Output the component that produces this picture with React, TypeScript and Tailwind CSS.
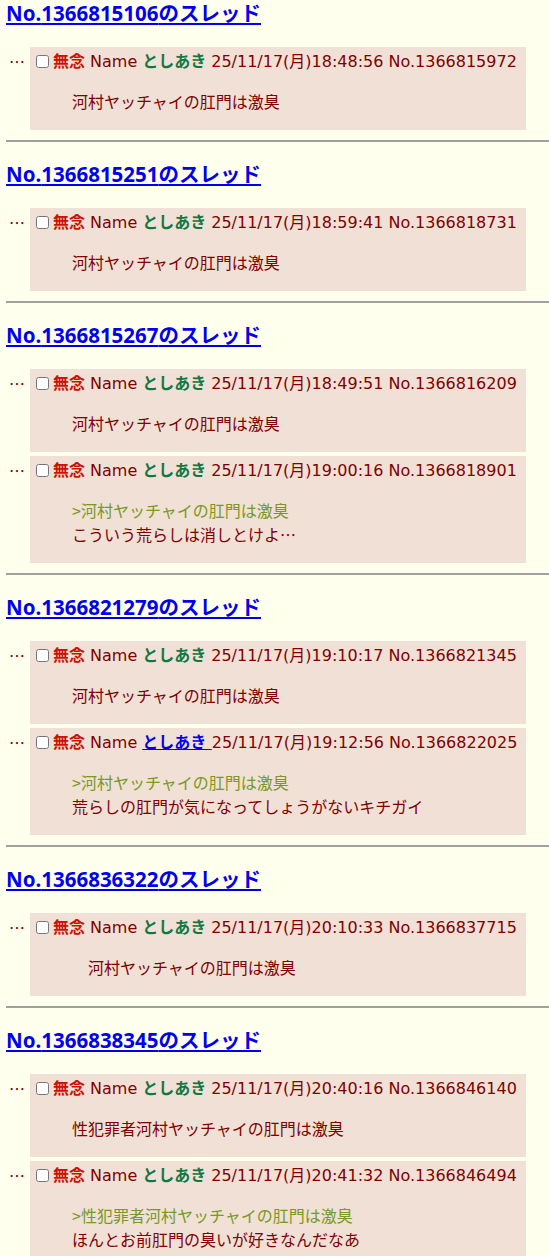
import React from "react";

type Reply = {
  date: string;
  no: string;
  quote?: string;
  body: string;
  mailto?: boolean;
};

type Thread = {
  no: string;
  replies: Reply[];
};

const threads: Thread[] = [
  {
    no: "1366815106",
    replies: [{ date: "25/11/17(月)18:48:56", no: "1366815972", body: "河村ヤッチャイの肛門は激臭" }],
  },
  {
    no: "1366815251",
    replies: [{ date: "25/11/17(月)18:59:41", no: "1366818731", body: "河村ヤッチャイの肛門は激臭" }],
  },
  {
    no: "1366815267",
    replies: [
      { date: "25/11/17(月)18:49:51", no: "1366816209", body: "河村ヤッチャイの肛門は激臭" },
      {
        date: "25/11/17(月)19:00:16",
        no: "1366818901",
        quote: ">河村ヤッチャイの肛門は激臭",
        body: "こういう荒らしは消しとけよ…",
      },
    ],
  },
  {
    no: "1366821279",
    replies: [
      { date: "25/11/17(月)19:10:17", no: "1366821345", body: "河村ヤッチャイの肛門は激臭" },
      {
        date: "25/11/17(月)19:12:56",
        no: "1366822025",
        quote: ">河村ヤッチャイの肛門は激臭",
        body: "荒らしの肛門が気になってしょうがないキチガイ",
        mailto: true,
      },
    ],
  },
  {
    no: "1366836322",
    replies: [{ date: "25/11/17(月)20:10:33", no: "1366837715", body: "\u3000河村ヤッチャイの肛門は激臭" }],
  },
  {
    no: "1366838345",
    replies: [
      { date: "25/11/17(月)20:40:16", no: "1366846140", body: "性犯罪者河村ヤッチャイの肛門は激臭" },
      {
        date: "25/11/17(月)20:41:32",
        no: "1366846494",
        quote: ">性犯罪者河村ヤッチャイの肛門は激臭",
        body: "ほんとお前肛門の臭いが好きなんだなあ",
      },
    ],
  },
];

const headerFont = { fontFamily: '"DejaVu Sans", "Noto Sans CJK JP", sans-serif' };
const cjkFont = { fontFamily: '"Noto Sans CJK JP", "Noto Sans", sans-serif' };

function ReplyRow({ reply }: { reply: Reply }) {
  return (
    <div className="flex">
      <div className="w-[30px] shrink-0 pl-[9px] pt-[3px] leading-[22px] text-[#800000]" style={cjkFont}>
        …
      </div>
      <div className="w-[496px] bg-[#f0e0d6] p-[2px]">
        <div
          className="flex h-[23px] items-center whitespace-nowrap pt-[2px] text-[16px] leading-[20px]"
          style={headerFont}
        >
          <input type="checkbox" className="mx-[4px] my-0 h-[13px] w-[13px] shrink-0" />
          <span className="font-bold text-[#cc1105]">無念</span>
          <span className="ml-[5px]">Name</span>
          {reply.mailto ? (
            <a href="#" className="ml-[5px] whitespace-pre font-bold text-[#0000ee] underline">
              {"としあき "}
            </a>
          ) : (
            <span className="ml-[5px] font-bold text-[#117743]">としあき</span>
          )}
          <span className={reply.mailto ? "" : "ml-[5px]"}>{reply.date}</span>
          <span className="ml-[5px]">No.{reply.no}</span>
        </div>
        <div className="mb-[15px] ml-[40px] mt-[17px] leading-[24px]" style={cjkFont}>
          {reply.quote && <div className="text-[#789922]">{reply.quote}</div>}
          <div className="whitespace-pre">{reply.body}</div>
        </div>
      </div>
    </div>
  );
}

export default function App() {
  return (
    <div
      className="min-h-[1256px] bg-[#ffffee] text-[16px] text-[#800000]"
      style={{ fontFamily: '"Noto Sans", "Noto Sans CJK JP", sans-serif' }}
    >
      {threads.map((thread, i) => (
        <div key={thread.no} className={i === 0 ? "pt-[1px]" : "pt-[20px]"}>
          <div className="h-[25px] pl-[6px] text-[20.5px] leading-[25px]">
            <a href="#" className="font-bold text-[#0000ee] underline">
              No.{thread.no}のスレッド
            </a>
          </div>
          <div className="mt-[21px] flex flex-col gap-[4px]">
            {thread.replies.map((reply) => (
              <ReplyRow key={reply.no} reply={reply} />
            ))}
          </div>
          <div className="ml-[6px] mt-[10px] border-t-2 border-t-[#a0a0a0]" />
        </div>
      ))}
    </div>
  );
}
